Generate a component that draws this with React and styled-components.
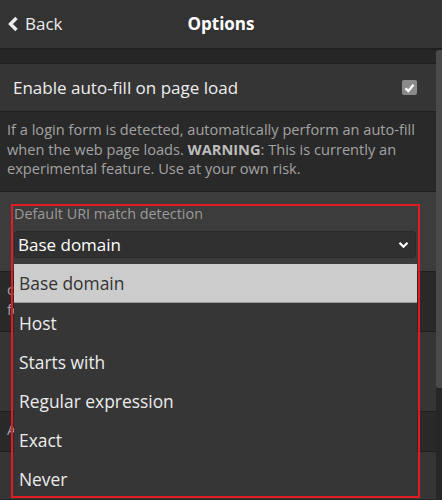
import React from "react";
import styled, { createGlobalStyle } from "styled-components";

const Global = createGlobalStyle`
  html, body { margin: 0; padding: 0; background: #262626; }
  body { font-family: "Open Sans", "DejaVu Sans", sans-serif; }
  * { box-sizing: border-box; }
`;

const Page = styled.div`
  position: relative;
  width: 442px;
  height: 500px;
  overflow: hidden;
  background: #262626;
  display: flex;
  flex-direction: column;
`;

const Header = styled.header`
  height: 50px;
  flex: none;
  background: #333333;
  border-bottom: 2px solid #202020;
  display: grid;
  grid-template-columns: 1fr auto 1fr;
  align-items: center;
  padding: 0 7px;
`;

const BackLink = styled.a`
  display: flex;
  align-items: center;
  gap: 6px;
  color: #ececec;
  font-size: 17px;
  text-decoration: none;
  padding-bottom: 1px;
`;

const Title = styled.h1`
  margin: 0;
  font-size: 17px;
  font-weight: 700;
  color: #ffffff;
  padding-bottom: 1px;
`;

const Body = styled.div`
  flex: 1;
  display: flex;
  min-height: 0;
`;

const Main = styled.main`
  flex: 1;
  padding-top: 13px;
  overflow: hidden;
`;

const Track = styled.div`
  width: 6px;
  flex: none;
  background: #262626;
`;

const Thumb = styled.div`
  height: 338px;
  background: #4a4a4a;
  border-radius: 3px 0 0 3px;
`;

const Row = styled.div`
  background: #353535;
  border-top: 1px solid #1f1f1f;
  min-height: ${(p) => p.$h || 48}px;
  padding: 0 19px 0 13px;
  display: flex;
  align-items: center;
  justify-content: space-between;
`;

const RowLabel = styled.span`
  color: #eeeeee;
  font-size: 17px;
`;

const Check = styled.span`
  width: 15px;
  height: 15px;
  border-radius: 2px;
  background: #8a8a8a;
  display: flex;
  align-items: center;
  justify-content: center;
`;

const Desc = styled.div`
  background: #292929;
  border-top: 1px solid #1f1f1f;
  min-height: ${(p) => p.$h || 80}px;
  padding: 8px 10px 0 7px;
  color: #a3a3a3;
  font-size: 14.6px;
  line-height: 19.5px;
  b { color: #bdbdbd; font-weight: 700; }
`;

const Field = styled.div`
  background: #3c3c3c;
  border-top: 1px solid #1f1f1f;
  height: 80px;
  padding: 13px 20px 0 14px;
  display: flex;
  flex-direction: column;
`;

const FieldLabel = styled.label`
  color: #9a9a9a;
  font-size: 14.4px;
  line-height: 18px;
  margin-bottom: 8px;
`;

const SelectBox = styled.div`
  height: 27px;
  background: #303030;
  border: 1px solid #2a2a2a;
  border-radius: 3px;
  display: flex;
  align-items: center;
  justify-content: space-between;
  padding: 0 6px 0 3px;
  color: #ffffff;
  font-size: 17px;
`;

const Mark = styled.div`
  position: absolute;
  left: 11px;
  top: 204px;
  width: 409px;
  height: 294px;
  border: 2px solid #e31b23;
  pointer-events: none;
  z-index: 3;
`;

const List = styled.ul`
  position: absolute;
  left: 14px;
  top: 264px;
  width: 403px;
  height: 231px;
  margin: 0;
  padding: 0;
  list-style: none;
  background: #363636;
  z-index: 2;
`;

const Option = styled.li`
  height: 39px;
  display: flex;
  align-items: center;
  padding-left: 5px;
  font-size: 17.4px;
  color: ${(p) => (p.$active ? "#333333" : "#ececec")};
  background: ${(p) => (p.$active ? "#cccccc" : "transparent")};
  border-bottom: ${(p) => (p.$active ? "1px solid #9a9a9a" : "none")};
`;

const options = ["Base domain", "Host", "Starts with", "Regular expression", "Exact", "Never"];

export default function App() {
  return (
    <Page>
      <Global />
      <Header>
        <BackLink href="#">
          <svg width="12" height="16" viewBox="0 0 12 16">
            <path d="M9.5 2 L3.5 8 L9.5 14" fill="none" stroke="#ececec" strokeWidth="3.4" strokeLinejoin="miter" />
          </svg>
          Back
        </BackLink>
        <Title>Options</Title>
        <span />
      </Header>
      <Body>
        <Main>
          <Row>
            <RowLabel>Enable auto-fill on page load</RowLabel>
            <Check>
              <svg width="11" height="10" viewBox="0 0 11 10">
                <path d="M1.5 5.2 L4.3 8 L9.5 1.8" fill="none" stroke="#ffffff" strokeWidth="2.2" />
              </svg>
            </Check>
          </Row>
          <Desc>
            If a login form is detected, automatically perform an auto-fill when the web page loads.{" "}
            <b>WARNING</b>: This is currently an experimental feature. Use at your own risk.
          </Desc>
          <Field>
            <FieldLabel>Default URI match detection</FieldLabel>
            <SelectBox>
              <span>Base domain</span>
              <svg width="11" height="8" viewBox="0 0 11 8">
                <path d="M1.5 1.8 L5.5 5.8 L9.5 1.8" fill="none" stroke="#ffffff" strokeWidth="2.2" />
              </svg>
            </SelectBox>
          </Field>
          <Desc $h={60}>
            choose the default way that URI match detection is handled for logins when
            performing actions such as auto-fill.
          </Desc>
          <Row $h={80} />
          <Desc $h={40}>Always show context menu items</Desc>
          <Row $h={48} />
        </Main>
        <Track>
          <Thumb />
        </Track>
      </Body>
      <List>
        {options.map((o, i) => (
          <Option key={o} $active={i === 0}>
            {o}
          </Option>
        ))}
      </List>
      <Mark />
    </Page>
  );
}
